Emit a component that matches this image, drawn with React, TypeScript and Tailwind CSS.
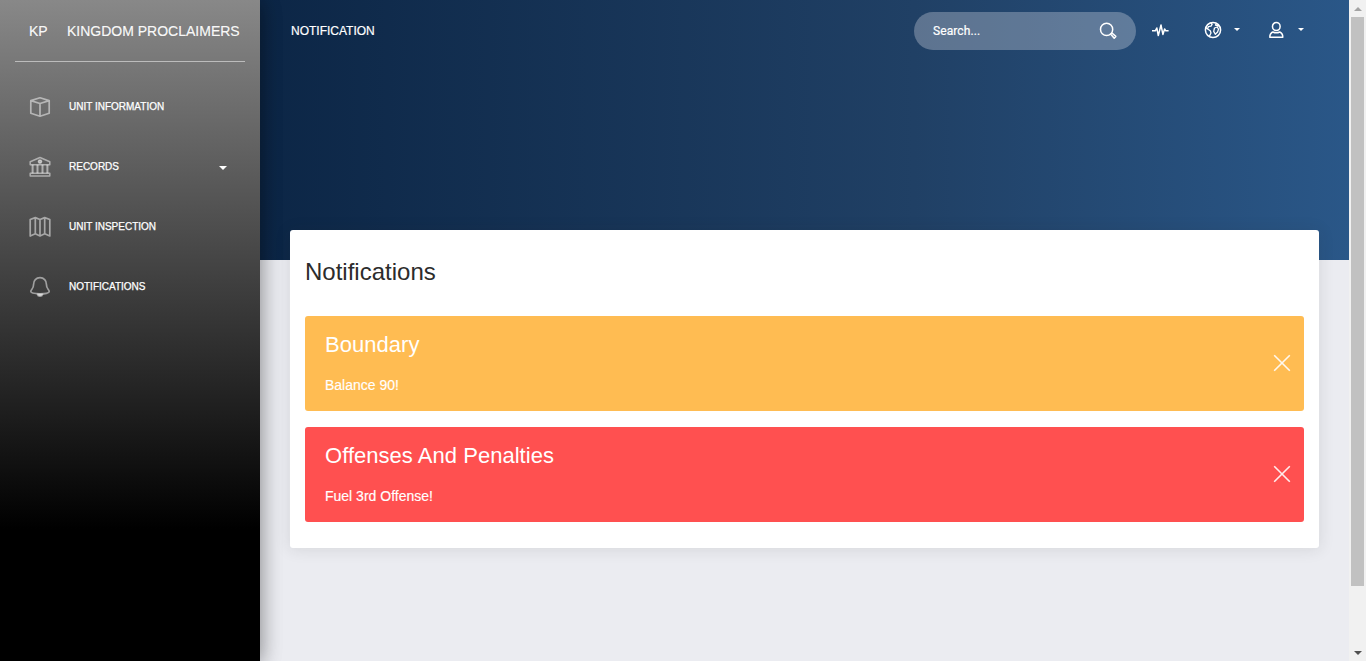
import type { ReactNode } from "react";

function Icon({ size, children, className = "", w = 2 }: { size: number; children: ReactNode; className?: string; w?: number }) {
  return (
    <svg width={size} height={size} viewBox={`0 0 ${size} ${size}`} fill="none" stroke="currentColor" strokeWidth={w} strokeLinejoin="round" className={`shrink-0 ${className}`}>
      {children}
    </svg>
  );
}

const BoxIcon = (
  <Icon size={22} w={1.7}>
    <path d="M11 1.8 20.2 4.6V17.2L11 20.2 1.8 17.2V4.6ZM1.8 4.6 11 7.5 20.2 4.6M11 7.5V20.2" />
  </Icon>
);
const BankIcon = (
  <Icon size={22} w={1.5}>
    <path d="M1.2 5.8 11 1.5 20.8 5.8V8.7H1.2ZM1.2 17.3H20.8V20H1.2Z" />
    <path d="M3.6 8.8V17.3M8.5 8.8V17.3M13.5 8.8V17.3M18.4 8.8V17.3" strokeWidth="2" />
    <circle cx="11" cy="5.6" r="1.6" fill="currentColor" />
  </Icon>
);
const MapIcon = (
  <Icon size={22} w={1.7}>
    <path d="M1.2 3.5 6.3 1.6 11 3.5 15.7 1.6 20.8 3.5V20L15.7 17.8 11 20 6.3 17.8 1.2 20ZM6.3 1.6V17.8M11 3.5V20M15.7 1.6V17.8" />
  </Icon>
);
const BellIcon = (
  <Icon size={22} w={1.7}>
    <path d="M11 1.6C7 1.6 4.6 4.6 4.6 8.3C4.6 13.5 1.8 13.3 1.8 15.6C1.8 17.2 6 17.8 11 17.8S20.2 17.2 20.2 15.6C20.2 13.3 17.4 13.5 17.4 8.3C17.4 4.6 15 1.6 11 1.6Z" />
    <path d="M8.5 18.3C9 20.8 13 20.8 13.5 18.3Z" fill="currentColor" />
  </Icon>
);

function Caret({ className = "" }: { className?: string }) {
  return <span className={`h-0 w-0 border-x-transparent border-t-white ${className}`} />;
}

const items = [
  { label: "UNIT INFORMATION", icon: BoxIcon },
  { label: "RECORDS", icon: BankIcon, caret: true },
  { label: "UNIT INSPECTION", icon: MapIcon },
  { label: "NOTIFICATIONS", icon: BellIcon },
];

function Sidebar() {
  return (
    <aside className="relative z-10 h-full w-[260px] shrink-0 bg-[linear-gradient(0deg,#000_20%,#888)] px-[15px] text-white shadow-[0_2px_22px_0_rgba(0,0,0,0.2),0_2px_20px_0_rgba(0,0,0,0.3)]">
      <div className="flex h-[62px] items-center whitespace-nowrap border-b border-white/50 pl-[14px] pt-[2px] text-[14px] text-white/95 [-webkit-text-stroke:0.2px]">
        <span className="w-[38px]">KP</span>
        <span>KINGDOM PROCLAIMERS</span>
      </div>
      <nav className="flex flex-col gap-[15px] pt-[22px]">
        {items.map((it) => (
          <a key={it.label} className="flex h-[45px] items-center pl-[14px]">
            <span className="text-white/50">{it.icon}</span>
            <span className="ml-[18px] grow whitespace-nowrap text-[10px] leading-[16px] [-webkit-text-stroke:0.25px]">{it.label}</span>
            {it.caret && <Caret className="mr-[18px] mt-[2px] border-x-4 border-t-4" />}
          </a>
        ))}
      </nav>
    </aside>
  );
}

function Navbar() {
  return (
    <header className="flex h-[62px] items-center pl-[31px] text-white">
      <h1 className="grow text-[12px] [-webkit-text-stroke:0.2px]">NOTIFICATION</h1>
      <div className="flex h-[38px] w-[222px] items-center justify-between rounded-full bg-[#ebecf1]/30 pl-[19px] pr-[19px]">
        <span className="font-['Roboto',sans-serif] text-[12px] tracking-[0.1px] [-webkit-text-stroke:0.2px]">Search...</span>
        <Icon size={18} w={1.5}>
          <circle cx="7.6" cy="7.4" r="6.1" />
          <path d="M11.8 12.2 13 11 16.8 14.4 15.2 16.2Z" />
        </Icon>
      </div>
      <Icon size={18} w={1.5} className="mb-[2px] ml-[15px]">
        <path d="M1 9.8H4.3L5.8 7 7.3 14.6 10 4 11.9 13.4 13.6 8 14.8 9.8H17.6" />
      </Icon>
      <Icon size={18} w={1.5} className="mb-[2px] ml-[35px]">
        <circle cx="9" cy="9" r="7.6" />
        <path d="M6.5 1.8 8.2 3.2 7 5.2 4.3 5.7 3.6 8 6.3 9.8 7 12 5.3 15.4M2 6.8 3.6 8M10.5 7 13.3 6 14.5 8.2 13.6 11 11.3 13.2 9.7 10.4ZM12.4 2.4 11.4 4.2 15 5" strokeWidth="1.3" />
      </Icon>
      <Caret className="mb-[3px] ml-3 border-x-[3px] border-t-[3px]" />
      <Icon size={18} w={1.5} className="mb-[2px] ml-[27px]">
        <rect x="5.5" y="1.5" width="7.6" height="8" rx="3.8" />
        <path d="M5.8 11C3.8 11.8 2.8 13.2 2.8 16.2H15.8C15.8 13.2 14.8 11.8 12.8 11C10.6 12 8 12 5.8 11Z" />
      </Icon>
      <Caret className="mb-[3px] ml-[13px] mr-[45px] border-x-[3px] border-t-[3px]" />
    </header>
  );
}

function Alert({ title, text, color }: { title: string; text: string; color: string }) {
  return (
    <div className={`flex h-[95px] items-center justify-between rounded-[3px] pl-5 pr-[13px] text-white ${color}`}>
      <div className="flex h-full flex-col">
        <h3 className="mt-[13px] text-[22px] leading-[32px] tracking-[0.03px]">{title}</h3>
        <p className="mt-[14px] text-[14px] leading-[20px] [-webkit-text-stroke:0.15px]">{text}</p>
      </div>
      <Icon size={18} w={1.6} className="mb-[2px] opacity-90">
        <path d="M1.2 1.2 16.8 16.8M16.8 1.2 1.2 16.8" />
      </Icon>
    </div>
  );
}

function Scrollbar() {
  return (
    <div className="flex h-full w-[17px] shrink-0 flex-col items-center bg-[#f1f1f1]">
      <div className="flex h-[17px] items-center justify-center">
        <span className="h-0 w-0 border-x-4 border-b-4 border-x-transparent border-b-[#a3a3a3]" />
      </div>
      <div className="h-[569px] w-[13px] bg-[#c1c1c1]" />
      <div className="mt-auto flex h-[17px] items-center justify-center">
        <span className="h-0 w-0 border-x-4 border-t-4 border-x-transparent border-t-[#505050]" />
      </div>
    </div>
  );
}

export default function App() {
  return (
    <div className="flex h-[661px] w-[1366px] overflow-hidden bg-[#ebecf1] font-['Liberation_Sans',Arial,sans-serif]">
      <Sidebar />
      <main className="flex min-w-0 grow flex-col">
        <div className="h-[260px] shrink-0 bg-[linear-gradient(to_right,#0c2646_0%,#204065_60%,#2a5788_100%)]">
          <Navbar />
        </div>
        <section className="relative z-20 mx-[30px] -mt-[30px] h-[318px] rounded-[3px] bg-white px-[15px] shadow-[0_1px_15px_1px_rgba(39,39,39,0.1)]">
          <h2 className="pt-[24px] text-[24px] leading-[36px] text-[#2c2c2c]">Notifications</h2>
          <div className="mt-[26px] flex flex-col gap-4">
            <Alert title="Boundary" text="Balance 90!" color="bg-[#ffbc52]" />
            <Alert title="Offenses And Penalties" text="Fuel 3rd Offense!" color="bg-[#ff5050]" />
          </div>
        </section>
      </main>
      <Scrollbar />
    </div>
  );
}
